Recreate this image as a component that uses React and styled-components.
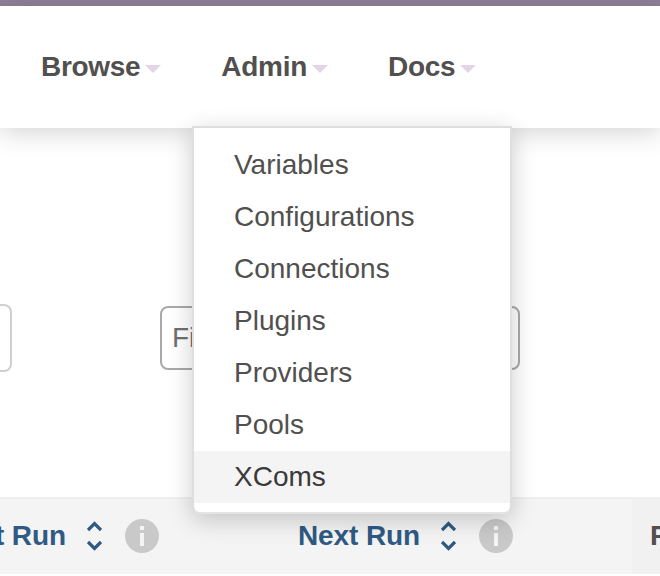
import React from "react";
import styled, { createGlobalStyle } from "styled-components";

const Global = createGlobalStyle`
  html, body { margin: 0; padding: 0; background: #fff; }
  body { font-family: "Liberation Sans", Arial, sans-serif; }
`;

const Page = styled.div`
  position: relative;
  width: 660px;
  height: 576px;
  overflow: hidden;
  display: flex;
  flex-direction: column;
  background: #fff;
`;
const TopBar = styled.div`
  height: 6px;
  flex: none;
  background: #8e8197;
`;
const Nav = styled.nav`
  position: relative;
  z-index: 1;
  height: 122px;
  flex: none;
  box-sizing: border-box;
  padding-left: 41px;
  display: flex;
  align-items: center;
  gap: 60px;
  background: #fff;
  box-shadow: 0 5px 24px rgba(0, 0, 0, 0.17);
`;
const NavItem = styled.a`
  display: flex;
  align-items: center;
  gap: 5px;
  font-size: 28px;
  font-weight: 700;
  line-height: 40px;
  letter-spacing: -0.3px;
  color: #51504f;
`;
const Caret = styled.span`
  width: 0;
  height: 0;
  margin-top: 4px;
  border-left: 8px solid transparent;
  border-right: 8px solid transparent;
  border-top: 8px solid #e3d5e6;
`;
const Filters = styled.div`
  flex: 1;
  display: flex;
  align-items: center;
  padding-top: 51px;
  box-sizing: border-box;
`;
const LeftInput = styled.div`
  width: 12px;
  height: 68px;
  flex: none;
  box-sizing: border-box;
  border: 2px solid #cfcfcf;
  border-left: 0;
  border-radius: 0 8px 8px 0;
  margin-right: 148px;
`;
const SearchInput = styled.div`
  width: 360px;
  height: 64px;
  flex: none;
  box-sizing: border-box;
  border: 2px solid #a9a9a9;
  border-radius: 8px;
  padding-left: 10px;
  display: flex;
  align-items: center;
  font-size: 28px;
  color: #6f6f6f;
`;
const TableHead = styled.div`
  height: 77px;
  flex: none;
  box-sizing: border-box;
  display: flex;
  align-items: center;
  background: #f4f4f4;
  border-top: 2px solid #efefef;
  margin-bottom: 2px;
`;
const HeadCell = styled.div`
  flex: none;
  width: ${(p) => p.$width}px;
  margin-left: ${(p) => p.$offset || 0}px;
  height: 100%;
  padding-bottom: 2px;
  box-sizing: border-box;
  display: flex;
  align-items: center;
  white-space: nowrap;
  overflow: hidden;
  justify-content: ${(p) => (p.$end ? "flex-end" : "flex-start")};
`;
const HeadLabel = styled.span`
  font-size: 28px;
  font-weight: 700;
  letter-spacing: -0.1px;
  color: #2f5a83;
`;
const SortIcon = styled.svg`
  width: 15px;
  height: 30px;
  flex: none;
  margin-left: 21px;
`;
const InfoIcon = styled.svg`
  width: 34px;
  height: 34px;
  flex: none;
  margin-left: 23px;
`;
const LastCol = styled.div`
  flex: 1;
  height: 100%;
  box-sizing: border-box;
  background: #f1f1f1;
  display: flex;
  align-items: center;
  padding: 0 0 2px 18px;
  font-size: 28px;
  font-weight: 700;
  white-space: nowrap;
  color: #51504f;
  overflow: hidden;
`;
const Menu = styled.ul`
  position: absolute;
  z-index: 2;
  left: 192px;
  top: 126px;
  width: 320px;
  height: 388px;
  box-sizing: border-box;
  margin: 0;
  padding: 11px 0;
  list-style: none;
  background: #fff;
  border: 2px solid #dedede;
  border-bottom-color: #e4e4e4;
  border-radius: 0 0 8px 8px;
  box-shadow: 0 6px 24px rgba(0, 0, 0, 0.2);
`;
const MenuItem = styled.li`
  height: 52px;
  display: flex;
  align-items: center;
  padding-left: 40px;
  font-size: 28px;
  color: ${(p) => (p.$active ? "#3a3a3a" : "#51504f")};
  background: ${(p) => (p.$active ? "#f4f4f4" : "transparent")};
`;

const Sort = () => (
  <SortIcon viewBox="0 0 15 30" fill="none" stroke="#2f5a83" strokeWidth="3.2">
    <path d="M1 9 7.5 2.5 14 9" />
    <path d="M1 21 7.5 27.5 14 21" />
  </SortIcon>
);
const Info = () => (
  <InfoIcon viewBox="0 0 34 34">
    <circle cx="17" cy="17" r="17" fill="#c9c9c9" />
    <rect x="15" y="7" width="4" height="4" fill="#f4f4f4" />
    <rect x="15" y="14" width="4" height="13" fill="#f4f4f4" />
  </InfoIcon>
);

const items = ["Variables", "Configurations", "Connections", "Plugins", "Providers", "Pools", "XComs"];

export default function App() {
  return (
    <Page>
      <Global />
      <TopBar />
      <Nav>
        {["Browse", "Admin", "Docs"].map((n) => (
          <NavItem key={n}>
            {n}
            <Caret />
          </NavItem>
        ))}
      </Nav>
      <Filters>
        <LeftInput />
        <SearchInput>Filter DAGs</SearchInput>
      </Filters>
      <TableHead>
        <HeadCell $width={159} $end>
          <HeadLabel>Last Run</HeadLabel>
          <Sort />
          <Info />
        </HeadCell>
        <HeadCell $width={334} $offset={139}>
          <HeadLabel>Next Run</HeadLabel>
          <Sort />
          <Info />
        </HeadCell>
        <LastCol>Recent Tasks</LastCol>
      </TableHead>
      <Menu>
        {items.map((i) => (
          <MenuItem key={i} $active={i === "XComs"}>
            {i}
          </MenuItem>
        ))}
      </Menu>
    </Page>
  );
}
